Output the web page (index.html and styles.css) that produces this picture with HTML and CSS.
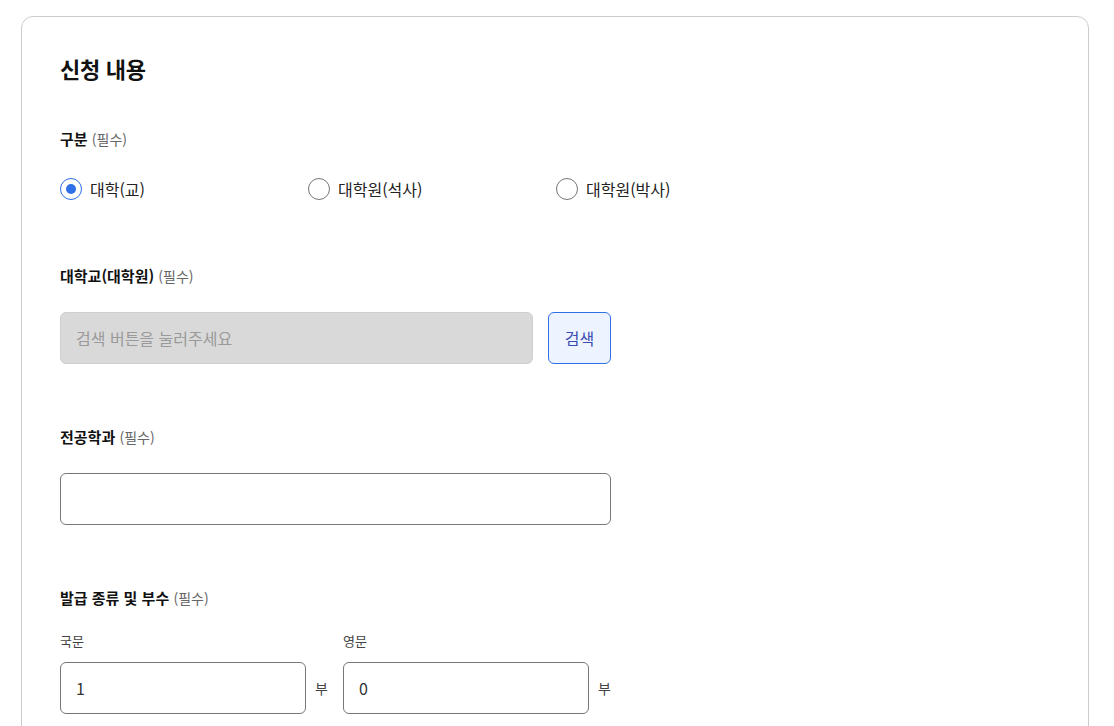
FILE: index.html
```html
<!DOCTYPE html>
<html lang="ko">
<head>
<meta charset="utf-8">
<title>신청 내용</title>
<link rel="stylesheet" href="styles.css">
</head>
<body>
<section class="card">
  <h2 class="title">신청 내용</h2>

  <div class="field">
    <div class="label">구분 <span class="req">(필수)</span></div>
    <div class="radios">
      <label class="radio"><input type="radio" name="kind" checked><span>대학(교)</span></label>
      <label class="radio"><input type="radio" name="kind"><span>대학원(석사)</span></label>
      <label class="radio"><input type="radio" name="kind"><span>대학원(박사)</span></label>
    </div>
  </div>

  <div class="field">
    <div class="label">대학교(대학원) <span class="req">(필수)</span></div>
    <div class="search-row">
      <input class="input input-disabled" type="text" placeholder="검색 버튼을 눌러주세요" disabled>
      <button class="btn-search" type="button">검색</button>
    </div>
  </div>

  <div class="field">
    <div class="label">전공학과 <span class="req">(필수)</span></div>
    <input class="input input-major" type="text">
  </div>

  <div class="field">
    <div class="label">발급 종류 및 부수 <span class="req">(필수)</span></div>
    <div class="copies">
      <div class="copy">
        <div class="sublabel">국문</div>
        <div class="copy-row">
          <input class="input input-copy" type="text" value="1">
          <span class="unit">부</span>
        </div>
      </div>
      <div class="copy">
        <div class="sublabel">영문</div>
        <div class="copy-row">
          <input class="input input-copy" type="text" value="0">
          <span class="unit">부</span>
        </div>
      </div>
    </div>
  </div>
</section>
</body>
</html>
```

FILE: styles.css
```css
* { box-sizing: border-box; }

html, body {
  margin: 0;
  padding: 0;
  background: #ffffff;
}

body {
  padding: 16px 25px 0 21px;
  font-family: "Noto Sans CJK KR", "Noto Sans", sans-serif;
  color: #222222;
}

.card {
  border: 1px solid #cccccc;
  border-radius: 12px;
  padding: 35px 38px 40px 38px;
  background: #ffffff;
  min-height: 760px;
}

.title {
  margin: 0 0 44px 0;
  font-size: 22px;
  line-height: 32px;
  font-weight: 700;
  color: #111111;
  letter-spacing: -0.3px;
}

.field {
  margin-bottom: 62px;
}

.label {
  font-size: 15px;
  line-height: 22px;
  font-weight: 700;
  color: #111111;
  margin-bottom: 25px;
}

.req {
  font-size: 14px;
  font-weight: 400;
  color: #666666;
}

.radios {
  display: flex;
  height: 28px;
  align-items: center;
}

.radio {
  display: flex;
  align-items: center;
  gap: 8px;
  width: 248px;
  font-size: 16px;
  color: #222222;
  cursor: pointer;
}

.radio input {
  appearance: none;
  -webkit-appearance: none;
  margin: 0;
  width: 22px;
  height: 22px;
  border: 1px solid #767676;
  border-radius: 50%;
  background: #ffffff;
  display: grid;
  place-items: center;
}

.radio input:checked {
  border: 1.5px solid #2f6fe8;
}

.radio input:checked::after {
  content: "";
  width: 10px;
  height: 10px;
  border-radius: 50%;
  background: #2f6fe8;
}

.search-row {
  display: flex;
  gap: 15px;
}

.input {
  height: 52px;
  border: 1px solid #777777;
  border-radius: 6px;
  padding: 0 15px;
  font-family: inherit;
  font-size: 16px;
  color: #333333;
  background: #ffffff;
  outline: none;
}

.input-disabled {
  width: 473px;
  background: #d9d9d9;
  border-color: #cfcfcf;
}

.input-disabled::placeholder {
  color: #9a9a9a;
}

.btn-search {
  width: 63px;
  height: 52px;
  border: 1px solid #2f6fe8;
  border-radius: 6px;
  background: #eef4ff;
  color: #3a4bb0;
  font-family: inherit;
  font-size: 16px;
  padding: 0;
}

.input-major {
  width: 551px;
  display: block;
}

.copies {
  display: flex;
  margin-top: -2px;
}

.copy {
  display: flex;
  flex-direction: column;
}

.sublabel {
  font-size: 13px;
  line-height: 18px;
  color: #444444;
  margin-bottom: 12px;
}

.copy-row {
  display: flex;
  align-items: center;
}

.input-copy {
  width: 246px;
}

.unit {
  width: 37px;
  padding-left: 9px;
  font-size: 14px;
  color: #444444;
}
```
